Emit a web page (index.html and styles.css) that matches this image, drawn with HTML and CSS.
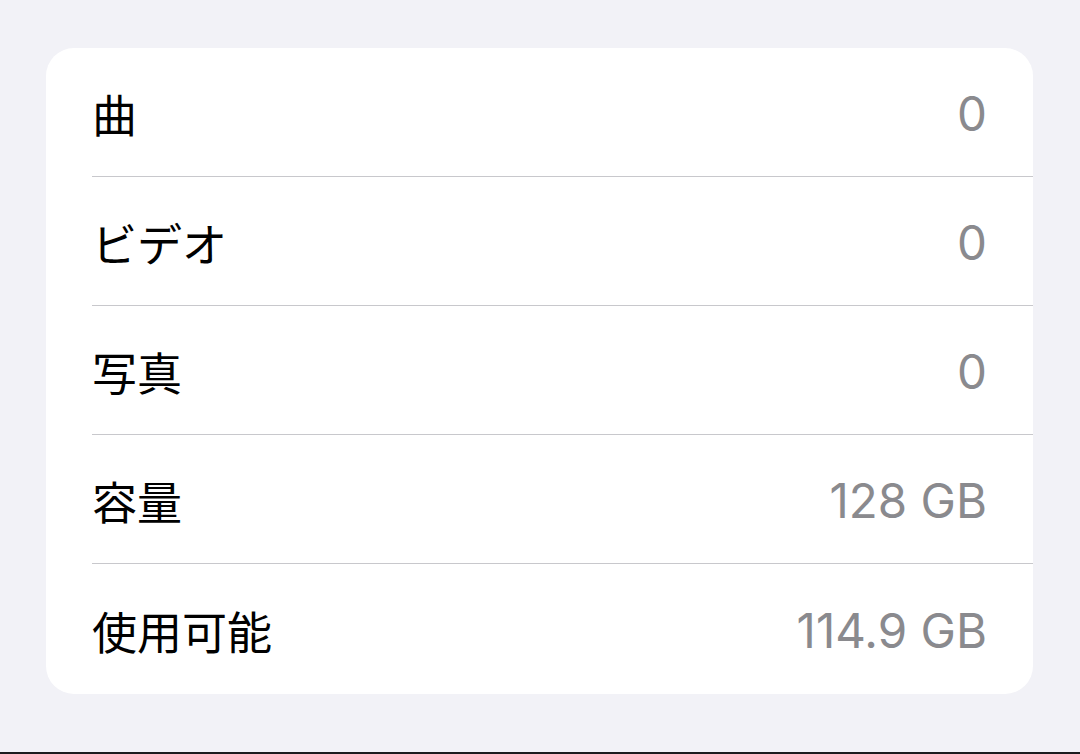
FILE: index.html
```html
<!DOCTYPE html>
<html lang="ja">
<head>
  <meta charset="UTF-8">
  <meta name="viewport" content="width=device-width, initial-scale=1.0">
  <title>情報</title>
  <link rel="stylesheet" href="styles.css">
</head>
<body>
  <div class="page">
    <div class="card">
      <div class="row">
        <div class="row-label">曲</div>
        <div class="row-value">0</div>
      </div>
      <div class="row">
        <div class="row-label">ビデオ</div>
        <div class="row-value">0</div>
      </div>
      <div class="row">
        <div class="row-label">写真</div>
        <div class="row-value">0</div>
      </div>
      <div class="row">
        <div class="row-label">容量</div>
        <div class="row-value">128 GB</div>
      </div>
      <div class="row">
        <div class="row-label">使用可能</div>
        <div class="row-value">114.9 GB</div>
      </div>
    </div>
  </div>
  <div class="bottom-edge"></div>
</body>
</html>
```

FILE: styles.css
```css
* {
  margin: 0;
  padding: 0;
  box-sizing: border-box;
}

body {
  width: 1080px;
  height: 754px;
  display: flex;
  flex-direction: column;
  background: #f2f2f7;
  font-family: Inter, "Noto Sans CJK JP", sans-serif;
  color: #000;
  overflow: hidden;
}

.page {
  flex: 1;
  padding: 48px 47px 0 46px;
}

.card {
  background: #fff;
  border-radius: 28px;
  padding-left: 46px;
}

.row {
  display: flex;
  align-items: center;
  justify-content: space-between;
  height: 129px;
  padding-right: 46px;
  padding-top: 3px;
  border-bottom: 1px solid #c8c8cc;
}

.row:last-child {
  height: 130px;
  border-bottom: none;
}

.row-label {
  font-family: "Noto Sans CJK JP", sans-serif;
  font-size: 45px;
  font-weight: 400;
}

.row-value {
  font-size: 47.5px;
  color: #8a8a8e;
}

.bottom-edge {
  height: 2px;
  background: #1c1c1e;
}
```
